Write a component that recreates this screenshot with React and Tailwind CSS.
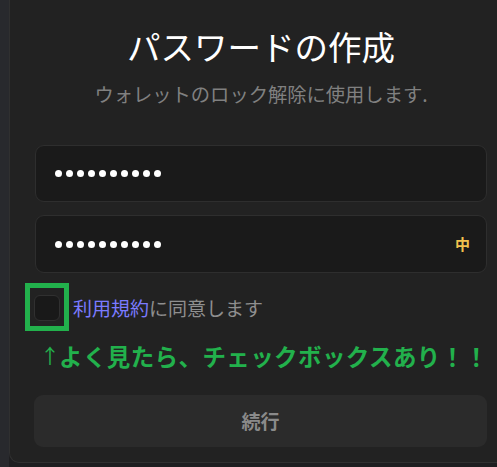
export default function App() {
  const dots = Array.from({ length: 10 });
  const font = { fontFamily: '"Noto Sans CJK JP", "Noto Sans", sans-serif' };

  return (
    <div className="flex h-[467px] w-full bg-[#1e1e20]" style={font}>
      <div className="w-[9px] h-full bg-[#28292d]" />
      <div className="flex-1 min-w-0 h-[463px] bg-[#222222] border-l border-b border-[#303030] rounded-bl-[10px] pl-[25px] pr-[10px] flex flex-col">
        <h1 className="mt-[26px] h-[40px] leading-[40px] text-center text-[33.5px] font-normal text-white">
          パスワードの作成
        </h1>
        <p className="mt-[16px] h-[24px] leading-[24px] text-center text-[19.3px] text-[#808080]">
          ウォレットのロック解除に使用します.
        </p>

        <div className="mt-[39px] h-[57px] rounded-[9px] border border-[#2e2e2e] bg-[#1a1a1a] flex items-center pl-[19px]">
          <div className="flex gap-[4px]">
            {dots.map((_, i) => (
              <div key={i} className="w-[7px] h-[7px] rounded-full bg-white" />
            ))}
          </div>
        </div>

        <div className="mt-[13px] h-[58px] rounded-[9px] border border-[#2e2e2e] bg-[#1a1a1a] flex items-center justify-between pl-[19px] pr-[16px]">
          <div className="flex gap-[4px]">
            {dots.map((_, i) => (
              <div key={i} className="w-[7px] h-[7px] rounded-full bg-white" />
            ))}
          </div>
          <span className="text-[15px] font-bold text-[#f2c14e]">中</span>
        </div>

        <div className="mt-[22px] h-[26px] flex items-center gap-[13px] -ml-[1px]">
          <div className="relative">
            <div className="w-[26px] h-[26px] rounded-[6px] border border-[#303030] bg-[#191919]" />
            <div className="absolute -left-[9px] -top-[12px] w-[44px] h-[48px] border-[5px] border-[#22b14c]" />
          </div>
          <span className="text-[19px] leading-[26px] text-[#8f8f8f]">
            <span className="text-[#7b7bff]">利用規約</span>に同意します
          </span>
        </div>

        <p className="mt-[20px] ml-[5px] h-[30px] leading-[30px] text-[23.5px] font-bold text-[#22b14c] whitespace-nowrap flex items-center">
          <span className="inline-block w-[19px] font-normal text-[20px]">↑</span>
          <span className="tracking-[0.4px]">よく見たら、チェックボックスあり！！</span>
        </p>

        <button className="mt-[24px] h-[52px] -ml-[1px] rounded-[9px] bg-[#2b2b2b] text-[19px] font-bold text-[#8a8a8a]">
          続行
        </button>
      </div>
    </div>
  );
}
